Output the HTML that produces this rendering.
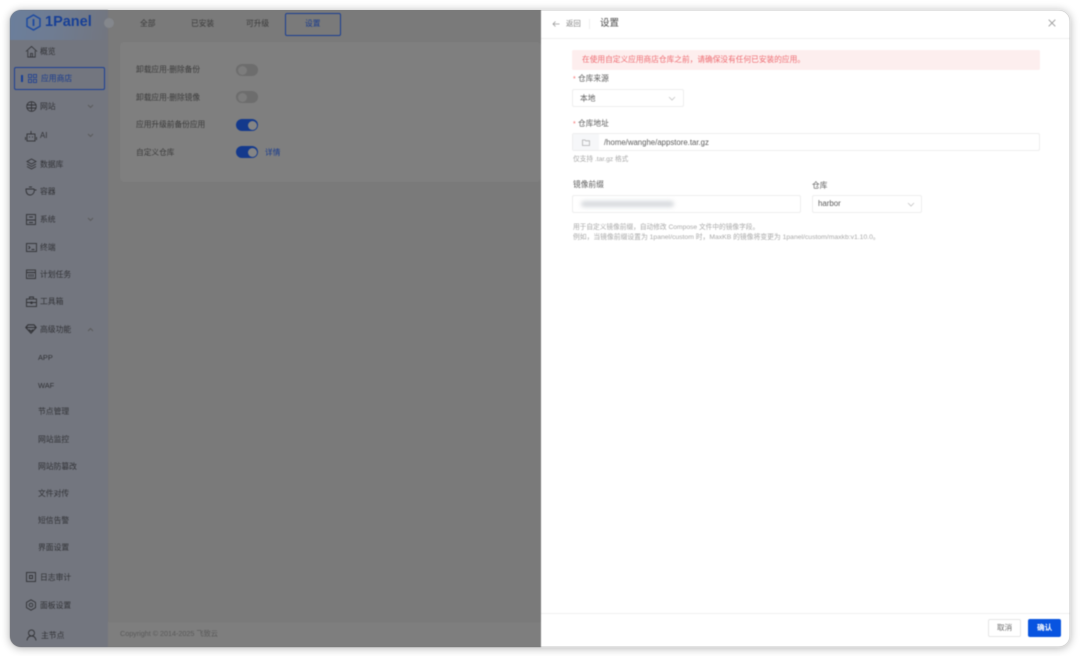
<!DOCTYPE html>
<html><head><meta charset="utf-8">
<style>
*{box-sizing:border-box}
html,body{margin:0;padding:0;width:1080px;height:656px;overflow:hidden;background:#fff;font-family:"Liberation Sans","Noto Sans CJK SC",sans-serif}
.win{position:absolute;left:10px;top:10px;width:1060px;height:637px;border-radius:11px;overflow:hidden;background:#7a7a7a;box-shadow:0 1px 9px rgba(0,0,0,.32)}
.abs{position:absolute;white-space:nowrap;line-height:1}
.blur{position:absolute;left:0;top:0;width:1080px;height:656px;filter:blur(.6px)}
.side{position:absolute;left:10px;top:10px;width:98px;height:637px;background:#73767f;border-radius:11px 0 0 11px}
.logoBg{position:absolute;left:10px;top:10px;width:98px;height:30px;background:linear-gradient(100deg,#6b7f9c 0%,#6f7c92 45%,#73767f 100%)}
.m{font-size:7.8px;color:#313236;position:absolute;line-height:10px;white-space:nowrap;transform:translateY(1px)}
.ic{position:absolute;fill:none;stroke:#313236;stroke-width:.9}
.sw{position:absolute;width:22px;height:12px;border-radius:6px}
.sw i{position:absolute;top:1.500px;width:9px;height:9px;border-radius:50%}
.on{background:#14398c}.on i{left:12px;background:#858585}
.off{background:#6d6d6d}.off i{left:1.500px;background:#7c7c7c}
.t{font-size:7.700px;color:#3a3a3a;position:absolute;line-height:10px;white-space:nowrap}
.drawer{position:absolute;left:541px;top:10px;width:529px;height:637px;background:#fff;border-radius:0 11px 11px 0}
.d{position:absolute;white-space:nowrap}
.lab{font-size:7.700px;color:#5c5c5c;line-height:10px}
.inp{position:absolute;background:#fff;border:1px solid #eeeeee;border-radius:2px;height:18px}
.hint{font-size:6.700px;color:#a8a8a8;line-height:10px}
</style></head><body>
<div class="win"></div>
<div class="blur">
<div class="side"></div>
<div class="logoBg" style="border-top-left-radius:11px"></div>

<svg class="ic" style="left:26px;top:14px;stroke:#1d4aa0;stroke-width:1.500" width="15" height="17" viewBox="0 0 15 17"><path d="M7.500 1 14 4.700v7.600L7.500 16 1 12.300V4.700Z"/><path d="M7.500 5v7" stroke-width="1.800"/></svg>
<div class="abs" style="left:45px;top:15px;font-size:14.500px;font-weight:bold;color:#173f96">1Panel</div>
<div class="abs" style="left:104px;top:18px;width:10px;height:10px;border-radius:50%;background:#84878c"></div>

<!-- tabs -->
<div class="t" style="left:140px;top:18px;top:19px">全部</div>
<div class="t" style="left:191px;top:19px">已安装</div>
<div class="t" style="left:246px;top:19px">可升级</div>
<div class="abs" style="left:285px;top:13px;width:56px;height:23px;border:1.300px solid #1c3f94;border-radius:2px"></div>
<div class="t" style="left:305px;top:19px;color:#173a8e">设置</div>

<!-- card -->
<div class="abs" style="left:120px;top:42px;width:421px;height:140px;background:#7f7f7f;border-radius:4px"></div>
<div class="t" style="left:136px;top:65px">卸载应用-删除备份</div>
<div class="t" style="left:136px;top:93px">卸载应用-删除镜像</div>
<div class="t" style="left:136px;top:120px">应用升级前备份应用</div>
<div class="t" style="left:136px;top:148px">自定义仓库</div>
<div class="sw off" style="left:236px;top:64px"><i></i></div>
<div class="sw off" style="left:236px;top:91px"><i></i></div>
<div class="sw on" style="left:236px;top:119px"><i></i></div>
<div class="sw on" style="left:236px;top:146px"><i></i></div>
<div class="t" style="left:265px;top:148px;color:#173a8e">详情</div>

<!-- footer -->
<div class="abs" style="left:108px;top:622px;width:433px;height:25px;background:#7e7e7e"></div>
<div class="abs" style="left:120px;top:630px;font-size:7.200px;color:#5a5a5a">Copyright © 2014-2025 飞致云</div>

<!-- sidebar items -->
<svg class="ic" style="left:25px;top:45px" width="13" height="13" viewBox="0 0 14 14"><path d="M1 7 7 1.500 13 7M3 6v7h8V6M6 13V9h2v4"/></svg>
<div class="m" style="left:40px;top:46px">概览</div>

<div class="abs" style="left:14px;top:67px;width:91px;height:23px;border:1.300px solid #1c3f94;border-radius:2px"></div>
<div class="abs" style="left:21px;top:75px;width:2px;height:7px;background:#173f96"></div>
<svg class="ic" style="left:28px;top:74px;stroke:#1c3f94" width="9" height="9" viewBox="0 0 10 10"><rect x=".5" y=".5" width="3.500" height="3.500"/><rect x="6" y=".5" width="3.500" height="3.500"/><rect x=".5" y="6" width="3.500" height="3.500"/><rect x="6" y="6" width="3.500" height="3.500"/></svg>
<div class="m" style="left:41px;top:73px;color:#173a8e">应用商店</div>

<svg class="ic" style="left:26px;top:101px" width="11" height="11" viewBox="0 0 11 11"><circle cx="5.500" cy="5.500" r="4.800"/><path d="M1 4h9M1 7h9M5.500 1v9"/></svg>
<div class="m" style="left:40px;top:101px">网站</div>
<svg class="ic" style="left:87px;top:104px;stroke:#5a5a5a" width="7" height="5" viewBox="0 0 7 5"><path d="M1 1l2.500 2.500L6 1"/></svg>

<svg class="ic" style="left:25px;top:130px" width="12" height="12" viewBox="0 0 12 12"><rect x="2" y="4" width="8" height="7"/><path d="M6 4V1M.5 7v3M11.500 7v3M4 7h1M7 7h1"/></svg>
<div class="m" style="left:40px;top:130px">AI</div>
<svg class="ic" style="left:87px;top:133px;stroke:#5a5a5a" width="7" height="5" viewBox="0 0 7 5"><path d="M1 1l2.500 2.500L6 1"/></svg>

<svg class="ic" style="left:26px;top:158px" width="11" height="12" viewBox="0 0 11 12"><path d="M5.500 1 10 3.500 5.500 6 1 3.500ZM1 6l4.500 2.500L10 6M1 8.500 5.500 11 10 8.500"/></svg>
<div class="m" style="left:40px;top:159px">数据库</div>

<svg class="ic" style="left:25px;top:186px" width="12" height="10" viewBox="0 0 12 10"><path d="M1 3h8c1 3-1 6-4 6S1 6 1 3ZM9 4h2.500M4 1h3"/></svg>
<div class="m" style="left:40px;top:186px">容器</div>

<svg class="ic" style="left:26px;top:214px" width="10" height="11" viewBox="0 0 10 11"><rect x=".5" y=".5" width="9" height="10"/><path d="M.5 6h9M3 3h4M3 8.500h4"/></svg>
<div class="m" style="left:40px;top:214px">系统</div>
<svg class="ic" style="left:87px;top:217px;stroke:#5a5a5a" width="7" height="5" viewBox="0 0 7 5"><path d="M1 1l2.500 2.500L6 1"/></svg>

<svg class="ic" style="left:26px;top:243px" width="11" height="9" viewBox="0 0 11 9"><rect x=".5" y=".5" width="10" height="8"/><path d="M2.500 3 4 4.500 2.500 6M5.500 6.500h3"/></svg>
<div class="m" style="left:40px;top:242px">终端</div>

<svg class="ic" style="left:26px;top:269px" width="10" height="10" viewBox="0 0 10 10"><rect x=".5" y="1" width="9" height="8.500"/><path d="M.5 3.500h9M3 5v3M5 5v3M7 5v3"/></svg>
<div class="m" style="left:40px;top:269px">计划任务</div>

<svg class="ic" style="left:26px;top:296px" width="11" height="11" viewBox="0 0 11 11"><rect x=".5" y="3" width="10" height="7.500"/><path d="M3.500 3V1h4v2M.5 6.500h10M5 5.500v2h1v-2"/></svg>
<div class="m" style="left:40px;top:296px">工具箱</div>

<svg class="ic" style="left:25px;top:324px" width="12" height="10" viewBox="0 0 12 10"><path d="M3 .8h6L11.200 3.500 6 9.200.8 3.500ZM.8 3.500h10.400M4 5.500l2 1.800 2-1.800" stroke-width="1.100"/></svg>
<div class="m" style="left:40px;top:324px">高级功能</div>
<svg class="ic" style="left:87px;top:327px;stroke:#5a5a5a" width="7" height="5" viewBox="0 0 7 5"><path d="M1 4l2.500-2.500L6 4"/></svg>

<div class="m" style="left:38px;top:352px;font-size:7.400px">APP</div>
<div class="m" style="left:38px;top:380px;font-size:7.400px">WAF</div>
<div class="m" style="left:38px;top:406px">节点管理</div>
<div class="m" style="left:38px;top:434px">网站监控</div>
<div class="m" style="left:38px;top:461px">网站防篡改</div>
<div class="m" style="left:38px;top:488px">文件对传</div>
<div class="m" style="left:38px;top:515px">短信告警</div>
<div class="m" style="left:38px;top:542px">界面设置</div>

<svg class="ic" style="left:26px;top:572px" width="10" height="10" viewBox="0 0 10 10"><rect x=".5" y=".5" width="9" height="9"/><path d="M3.500 3.500h3v3h-3z"/></svg>
<div class="m" style="left:40px;top:572px">日志审计</div>

<svg class="ic" style="left:25px;top:599px" width="12" height="12" viewBox="0 0 12 12"><path d="M6 .8 10.500 3.400v5.200L6 11.200 1.500 8.600V3.400Z"/><circle cx="6" cy="6" r="1.800"/></svg>
<div class="m" style="left:40px;top:600px">面板设置</div>

<svg class="ic" style="left:26px;top:629px" width="11" height="12" viewBox="0 0 11 12"><circle cx="5.500" cy="4" r="3"/><path d="M1 11.500c.4-3 2-4.500 4.500-4.500s4.100 1.500 4.500 4.500"/></svg>
<div class="m" style="left:41px;top:630px">主节点</div>

<!-- drawer -->
<div class="drawer"></div>
<div class="abs" style="left:541px;top:38px;width:529px;height:1px;background:#f0f0f0"></div>
<svg class="abs" style="left:552px;top:20px" width="8" height="8" viewBox="0 0 8 8" fill="none" stroke="#999" stroke-width=".8"><path d="M7.500 4H1M3.500 1.500 1 4l2.500 2.500"/></svg>
<div class="d" style="left:566px;top:19px;font-size:7.400px;line-height:10px;color:#808080">返回</div>
<div class="abs" style="left:589px;top:19px;width:1px;height:10px;background:#f0f0f0"></div>
<div class="d" style="left:600px;top:18px;font-size:9.500px;line-height:12px;color:#4a4a4a">设置</div>
<svg class="abs" style="left:1048px;top:19px" width="8" height="8" viewBox="0 0 8 8" fill="none" stroke="#999" stroke-width=".9"><path d="M.7.7l6.600 6.600M7.300.7.7 7.300"/></svg>

<div class="abs" style="left:572px;top:50px;width:468px;height:20px;background:#fdeeee;border-radius:2px"></div>
<div class="d" style="left:582px;top:55px;font-size:7.700px;line-height:10px;color:#ee6a70">在使用自定义应用商店仓库之前，请确保没有任何已安装的应用。</div>

<div class="d" style="left:573px;top:77px;font-size:7px;line-height:6px;color:#f56c6c">*</div>
<div class="d lab" style="left:578px;top:74px">仓库来源</div>
<div class="inp" style="left:572px;top:89px;width:112px"></div>
<div class="d" style="left:580px;top:94px;font-size:7.700px;line-height:10px;color:#5c5c5c">本地</div>
<svg class="abs" style="left:668px;top:96px" width="8" height="5" viewBox="0 0 8 5" fill="none" stroke="#c4c4c4" stroke-width=".8"><path d="M1 1l3 3 3-3"/></svg>

<div class="d" style="left:573px;top:122px;font-size:7px;line-height:6px;color:#f56c6c">*</div>
<div class="d lab" style="left:578px;top:119px">仓库地址</div>
<div class="inp" style="left:572px;top:133px;width:468px"></div>
<div class="abs" style="left:573px;top:134px;width:26px;height:16px;background:#f6f7f9"></div>
<svg class="abs" style="left:582px;top:139px" width="8" height="7" viewBox="0 0 8 7" fill="none" stroke="#b0b0b0" stroke-width=".8"><path d="M.5 1h2.500l.7.8h3.800v4.700H.5Z"/></svg>
<div class="d" style="left:604px;top:138px;font-size:7.800px;line-height:10px;color:#5c5c5c">/home/wanghe/appstore.tar.gz</div>
<div class="d hint" style="left:573px;top:155px">仅支持 .tar.gz 格式</div>

<div class="d lab" style="left:573px;top:180px">镜像前缀</div>
<div class="d lab" style="left:812px;top:181px">仓库</div>
<div class="inp" style="left:572px;top:195px;width:229px"></div>
<div class="abs" style="left:581px;top:201px;width:93px;height:6px;background:#d6d9dd;border-radius:3px;filter:blur(2px)"></div>
<div class="inp" style="left:812px;top:195px;width:110px"></div>
<div class="d" style="left:818px;top:199px;font-size:7.900px;line-height:10px;color:#5c5c5c">harbor</div>
<svg class="abs" style="left:907px;top:202px" width="8" height="5" viewBox="0 0 8 5" fill="none" stroke="#c4c4c4" stroke-width=".8"><path d="M1 1l3 3 3-3"/></svg>

<div class="d hint" style="left:573px;top:223px">用于自定义镜像前缀，自动修改 Compose 文件中的镜像字段。</div>
<div class="d hint" style="left:573px;top:233px;font-size:6.800px">例如，当镜像前缀设置为 1panel/custom 时，MaxKB 的镜像将变更为 1panel/custom/maxkb:v1.10.0。</div>

<div class="abs" style="left:541px;top:613px;width:529px;height:1px;background:#f0f0f0"></div>
<div class="abs" style="left:988px;top:619px;width:33px;height:18px;border:1px solid #e6e6e6;border-radius:2px"></div>
<div class="d" style="left:997px;top:623px;font-size:7.600px;line-height:10px;color:#6c6c6c">取消</div>
<div class="abs" style="left:1028px;top:619px;width:33px;height:18px;background:#0854e0;border-radius:2px"></div>
<div class="d" style="left:1037px;top:623px;font-size:7.600px;line-height:10px;color:#fff;font-weight:bold">确认</div>
</div>
</body></html>
